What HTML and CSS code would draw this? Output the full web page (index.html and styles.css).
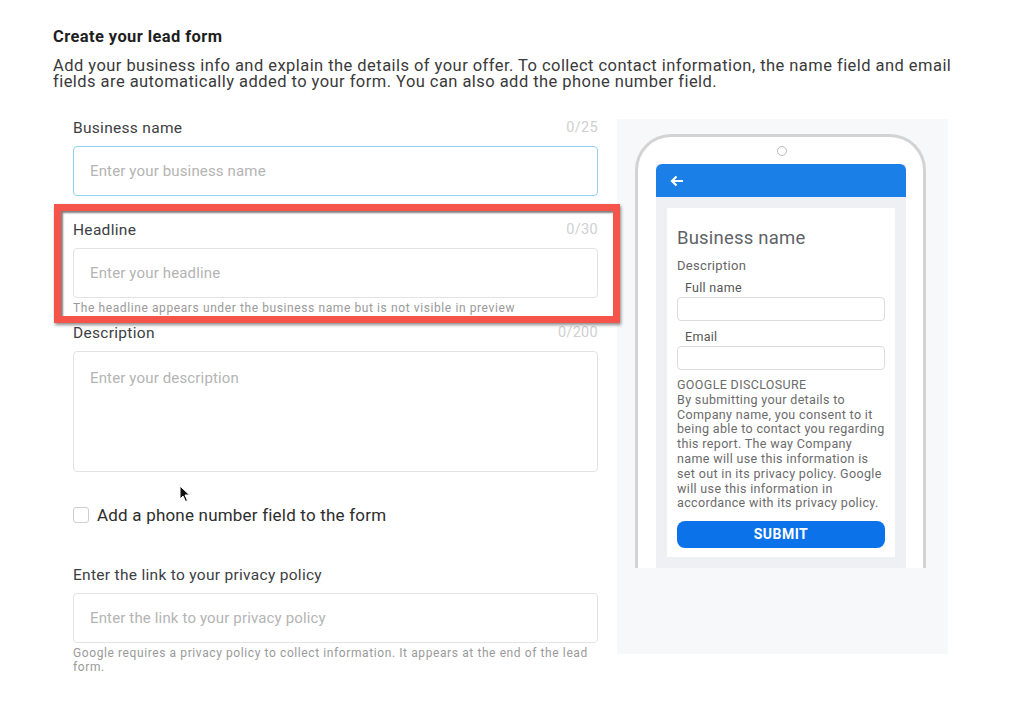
FILE: index.html
```html
<!DOCTYPE html>
<html>
<head>
<meta charset="utf-8">
<link rel="stylesheet" href="styles.css">
</head>
<body>
<div class="page">
  <h1 class="title">Create your lead form</h1>
  <p class="intro">Add your business info and explain the details of your offer. To collect contact information, the name field and email fields are automatically added to your form. You can also add the phone number field.</p>
  <div class="main">
    <div class="form">
      <div class="field f1">
        <div class="label-row"><span class="label">Business name</span><span class="count">0/25</span></div>
        <div class="input focus">Enter your business name</div>
      </div>
      <div class="field f2">
        <div class="label-row"><span class="label">Headline</span><span class="count">0/30</span></div>
        <div class="input">Enter your headline</div>
        <div class="helper">The headline appears under the business name but is not visible in preview</div>
      </div>
      <div class="field f3">
        <div class="label-row"><span class="label">Description</span><span class="count">0/200</span></div>
        <div class="input textarea">Enter your description</div>
      </div>
      <div class="check-row">
        <span class="checkbox"></span>
        <span class="check-label">Add a phone number field to the form</span>
      </div>
      <div class="field f4">
        <div class="label-row"><span class="label">Enter the link to your privacy policy</span></div>
        <div class="input">Enter the link to your privacy policy</div>
        <div class="helper">Google requires a privacy policy to collect information. It appears at the end of the lead form.</div>
      </div>
      <div class="highlight"></div>
      <svg class="cursor" width="12" height="18" viewBox="0 0 12 18"><path d="M1 1 L1 14 L4 11 L6.5 16.5 L8.5 15.5 L6 10 L10.5 10 Z" fill="#111" stroke="#fff" stroke-width="1"/></svg>
    </div>
    <div class="preview">
      <div class="phone">
        <div class="camera"></div>
        <div class="screen">
          <div class="appbar">
            <svg width="14" height="12" viewBox="0 0 14 12"><path d="M13 6 H2.5 M6.5 1.5 L2 6 L6.5 10.5" fill="none" stroke="#fff" stroke-width="2.2"/></svg>
          </div>
          <div class="screen-body">
            <div class="card">
              <div class="p-title">Business name</div>
              <div class="p-desc">Description</div>
              <div class="p-label">Full name</div>
              <div class="p-input"></div>
              <div class="p-label">Email</div>
              <div class="p-input"></div>
              <div class="p-disc">GOOGLE DISCLOSURE<br>By submitting your details to Company name, you consent to it being able to contact you regarding this report. The way Company name will use this information is set out in its privacy policy. Google will use this information in accordance with its privacy policy.</div>
              <div class="p-submit">SUBMIT</div>
            </div>
          </div>
        </div>
      </div>
    </div>
  </div>
</div>
</body>
</html>
```

FILE: styles.css
```css
* { box-sizing: border-box; }
html, body { margin: 0; padding: 0; background: #fff; }
body { font-family: Roboto, "Noto Sans", Arial, sans-serif; color: #202124; }

.page { padding: 28px 0 0 53px; width: 1024px; height: 701px; overflow: hidden; }

.title { margin: 0; font-size: 16.5px; font-weight: 700; line-height: 18px; letter-spacing: 0.4px; color: #1f1f1f; }
.intro { margin: 12px 0 0; width: 920px; font-size: 16.5px; line-height: 16px; letter-spacing: 0.45px; color: #3a3a3a; }

.main { display: flex; margin-top: 29px; }

.form { position: relative; width: 564px; padding-left: 20px; padding-top: 0; }
.field { width: 525px; }
.label-row { display: flex; justify-content: space-between; height: 18px; line-height: 18px; margin-bottom: 9px; }
.label { font-size: 15.5px; letter-spacing: 0.3px; color: #3c4043; }
.count { font-size: 14.5px; letter-spacing: 0.3px; color: #d0d0d0; }

.input { height: 50px; border: 1px solid #e3e3e3; border-radius: 4px; padding: 0 16px; line-height: 48px; font-size: 15px; letter-spacing: 0.15px; color: #b4b4b4; background: #fff; }
.input.focus { border-color: #93d2f2; height: 50px; }
.textarea { height: 121px; line-height: 18px; padding-top: 17px; }

.helper { margin-top: 3px; font-size: 12px; line-height: 14px; letter-spacing: 0.6px; color: #9a9a9a; }

.f2 { margin-top: 25px; }
.f3 { margin-top: 9px; }

.check-row { display: flex; align-items: center; margin-top: 34px; height: 18px; }
.checkbox { width: 16px; height: 16px; border: 1px solid #cfcfcf; border-radius: 3px; background: #fff; }
.check-label { margin-left: 8px; font-size: 17px; letter-spacing: 0.2px; color: #2d2d2d; }

.f4 { margin-top: 42px; }

.highlight { position: absolute; left: 1px; top: 85px; width: 566px; height: 119px; border: 7px solid #f5544a; box-shadow: 1px 2px 3px rgba(0,0,0,0.45), inset 2px 2px 2px rgba(0,0,0,0.5); pointer-events: none; }

.cursor { position: absolute; left: 126px; top: 366px; }

.preview { width: 331px; height: 535px; background: #f7f8fa; margin-left: 0; padding: 15px 0 0 18px; }
.phone { position: relative; width: 291px; height: 434px; border: 3px solid #d3d3d3; border-bottom: none; border-radius: 36px 36px 0 0; background: #fff; padding: 27px 18px 0; }
.camera { position: absolute; left: 139px; top: 9px; width: 10px; height: 10px; border: 1px solid #bdbdbd; border-radius: 50%; }
.screen { width: 250px; height: 404px; background: #eff0f3; }
.appbar { height: 33px; background: #1a7fe7; border-radius: 6px 6px 0 0; padding: 11px 0 0 14px; }
.appbar svg { display: block; }
.screen-body { padding: 11px 11px 0; }
.card { background: #fff; height: 349px; padding: 20px 10px 0; color: #666; }
.p-title { font-size: 18.5px; line-height: 20px; letter-spacing: 0.2px; color: #5f6368; }
.p-desc { margin-top: 10px; font-size: 13px; line-height: 16px; letter-spacing: 0.3px; color: #666; }
.p-label { margin-top: 7px; padding-left: 8px; font-size: 12.5px; line-height: 14px; letter-spacing: 0.3px; color: #555; }
.p-input { margin-top: 2px; height: 24px; border: 1px solid #dcdcdc; border-radius: 4px; }
.p-input + .p-label { margin-top: 9px; }
.p-disc { margin-top: 8px; font-size: 12.5px; line-height: 14.8px; letter-spacing: 0.35px; color: #6b6b6b; }
.p-submit { margin-top: 10px; height: 27px; border-radius: 8px; background: #0b72ea; color: #fff; font-size: 14px; font-weight: 700; text-align: center; line-height: 27px; letter-spacing: 0.5px; }
```
